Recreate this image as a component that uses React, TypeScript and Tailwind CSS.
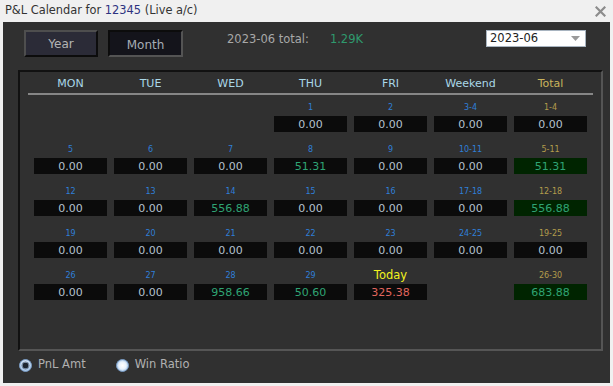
import React from "react";

type Cell = { label?: string; value?: string; kind?: "zero" | "pos" | "neg"; total?: boolean; today?: boolean };

const rows: Cell[][] = [
  [
    {}, {}, {},
    { label: "1", value: "0.00", kind: "zero" },
    { label: "2", value: "0.00", kind: "zero" },
    { label: "3-4", value: "0.00", kind: "zero" },
    { label: "1-4", value: "0.00", kind: "zero", total: true },
  ],
  [
    { label: "5", value: "0.00", kind: "zero" },
    { label: "6", value: "0.00", kind: "zero" },
    { label: "7", value: "0.00", kind: "zero" },
    { label: "8", value: "51.31", kind: "pos" },
    { label: "9", value: "0.00", kind: "zero" },
    { label: "10-11", value: "0.00", kind: "zero" },
    { label: "5-11", value: "51.31", kind: "pos", total: true },
  ],
  [
    { label: "12", value: "0.00", kind: "zero" },
    { label: "13", value: "0.00", kind: "zero" },
    { label: "14", value: "556.88", kind: "pos" },
    { label: "15", value: "0.00", kind: "zero" },
    { label: "16", value: "0.00", kind: "zero" },
    { label: "17-18", value: "0.00", kind: "zero" },
    { label: "12-18", value: "556.88", kind: "pos", total: true },
  ],
  [
    { label: "19", value: "0.00", kind: "zero" },
    { label: "20", value: "0.00", kind: "zero" },
    { label: "21", value: "0.00", kind: "zero" },
    { label: "22", value: "0.00", kind: "zero" },
    { label: "23", value: "0.00", kind: "zero" },
    { label: "24-25", value: "0.00", kind: "zero" },
    { label: "19-25", value: "0.00", kind: "zero", total: true },
  ],
  [
    { label: "26", value: "0.00", kind: "zero" },
    { label: "27", value: "0.00", kind: "zero" },
    { label: "28", value: "958.66", kind: "pos" },
    { label: "29", value: "50.60", kind: "pos" },
    { label: "Today", value: "325.38", kind: "neg", today: true },
    {},
    { label: "26-30", value: "683.88", kind: "pos", total: true },
  ],
];

const headers = ["MON", "TUE", "WED", "THU", "FRI", "Weekend", "Total"];

function DayCell({ c }: { c: Cell }) {
  if (!c.value) {
    return <div className="w-[73px] h-[33px]" />;
  }
  const labelCls = c.today
    ? "text-[11.5px] text-[#f2f21e] pt-[3px]"
    : c.total
    ? "text-[8px] text-[#b29c4c] pt-[3px]"
    : "text-[8px] text-[#2f7fd8] pt-[3px]";
  const valCls =
    c.kind === "pos" ? "text-[#2fa474]" : c.kind === "neg" ? "text-[#e2665e]" : "text-[#b6c2cf]";
  const bg = c.total && c.kind === "pos" ? "bg-[#002400]" : "bg-[#0b0b0b]";
  return (
    <div className="w-[73px] flex flex-col">
      <div className={`h-[14px] flex items-center justify-center leading-none ${labelCls}`}>{c.label}</div>
      <div className={`mt-[3px] h-[16px] flex items-center justify-center text-[11px] leading-none ${bg} ${valCls}`}>
        {c.value}
      </div>
    </div>
  );
}

function RadioChecked() {
  return (
    <svg width="13" height="13" viewBox="0 0 13 13">
      <defs>
        <radialGradient id="rc" cx="50%" cy="40%" r="60%">
          <stop offset="0%" stopColor="#ffffff" />
          <stop offset="100%" stopColor="#9ec0e4" />
        </radialGradient>
      </defs>
      <circle cx="6.5" cy="6.5" r="6" fill="url(#rc)" stroke="#7a9cc4" strokeWidth="1" />
      <circle cx="6.5" cy="6.5" r="3" fill="#1e2630" />
      <circle cx="6.5" cy="6.5" r="3.6" fill="none" stroke="#5c7490" strokeWidth="0.8" />
    </svg>
  );
}

function RadioUnchecked() {
  return (
    <svg width="13" height="13" viewBox="0 0 13 13">
      <defs>
        <radialGradient id="ru" cx="50%" cy="50%" r="55%">
          <stop offset="0%" stopColor="#ffffff" />
          <stop offset="55%" stopColor="#e8f2fc" />
          <stop offset="100%" stopColor="#8fb6e0" />
        </radialGradient>
      </defs>
      <circle cx="6.5" cy="6.5" r="6" fill="url(#ru)" stroke="#7a9cc4" strokeWidth="1" />
    </svg>
  );
}

export default function App() {
  return (
    <div className="w-[613px] h-[386px] bg-[#f0f0f0] font-['DejaVu_Sans',sans-serif] overflow-hidden flex flex-col">
      {/* Title bar */}
      <div className="h-[22px] flex items-center justify-between pl-[5px] pr-[7px]">
        <div className="text-[11.4px] text-[#333333] leading-none whitespace-nowrap">
          P&amp;L Calendar for <span className="text-[#2d3380]">12345</span> (Live a/c)
        </div>
        <svg width="11" height="11" viewBox="0 0 11 11">
          <path d="M1.5 1.5 L9.5 9.5 M9.5 1.5 L1.5 9.5" stroke="#8c8c8c" strokeWidth="2.2" strokeLinecap="square" />
        </svg>
      </div>

      {/* Dark body */}
      <div className="ml-[3px] w-[607px] h-[361px] bg-[#303030] flex flex-col">
        {/* Toolbar */}
        <div className="mt-[8px] h-[27px] flex items-start">
          <div className="ml-[21px] w-[74px] h-[27px] bg-[#2b2b37] border-2 border-t-[#4e4e4e] border-l-[#4e4e4e] border-b-[#0c0c0c] border-r-[#0c0c0c] flex items-center justify-center text-[12px] text-[#b4b4b4]">
            Year
          </div>
          <div className="ml-[10px] w-[75px] h-[27px] bg-[#14141b] border-2 border-t-[#0c0c0c] border-l-[#0c0c0c] border-b-[#545454] border-r-[#545454] flex items-center justify-center pt-[2px] text-[12px] text-[#a6adb4]">
            Month
          </div>
          <div className="ml-[44px] h-[19px] flex items-center text-[11.5px] text-[#a8a8a8] whitespace-nowrap">
            2023-06 total:
          </div>
          <div className="ml-[21px] h-[19px] flex items-center text-[11.5px] text-[#2f9a6e]">1.29K</div>
          <div className="ml-auto mr-[24px] w-[100px] h-[17px] bg-white border border-[#a8b4c0] flex items-center justify-between pl-[3px] pr-[5px]">
            <span className="text-[11.5px] text-[#222222] leading-none">2023-06</span>
            <svg width="9" height="5" viewBox="0 0 9 5">
              <path d="M0 0 L9 0 L4.5 5 Z" fill="#9a9a9a" />
            </svg>
          </div>
        </div>

        {/* Calendar panel */}
        <div className="ml-[15px] mt-[13px] w-[585px] h-[281px] border-2 border-t-[#111111] border-l-[#111111] border-b-[#555555] border-r-[#555555] flex flex-col">
          <div className="h-[21px] pt-[2px] pl-[14px] grid grid-cols-[repeat(7,73px)] gap-x-[7px] items-center">
            {headers.map((h) => (
              <div
                key={h}
                className={`text-center text-[11px] leading-none ${h === "Total" ? "text-[#c8b45c]" : "text-[#aad8e8]"}`}
              >
                {h}
              </div>
            ))}
          </div>
          <div className="ml-[8px] w-[565px] h-[2px] bg-[#868686]" />
          <div className="mt-[4px] pl-[14px] flex flex-col gap-y-[9px]">
            {rows.map((r, i) => (
              <div key={i} className="flex gap-x-[7px]">
                {r.map((c, j) => (
                  <DayCell key={j} c={c} />
                ))}
              </div>
            ))}
          </div>
        </div>

        {/* Radio row */}
        <div className="mt-[7px] h-[14px] pl-[16px] flex items-center text-[11.5px] text-[#b0b0b0]">
          <RadioChecked />
          <span className="ml-[6px] leading-none">PnL Amt</span>
          <span className="ml-[30px] flex items-center">
            <RadioUnchecked />
          </span>
          <span className="ml-[6px] leading-none">Win Ratio</span>
        </div>
      </div>
    </div>
  );
}
